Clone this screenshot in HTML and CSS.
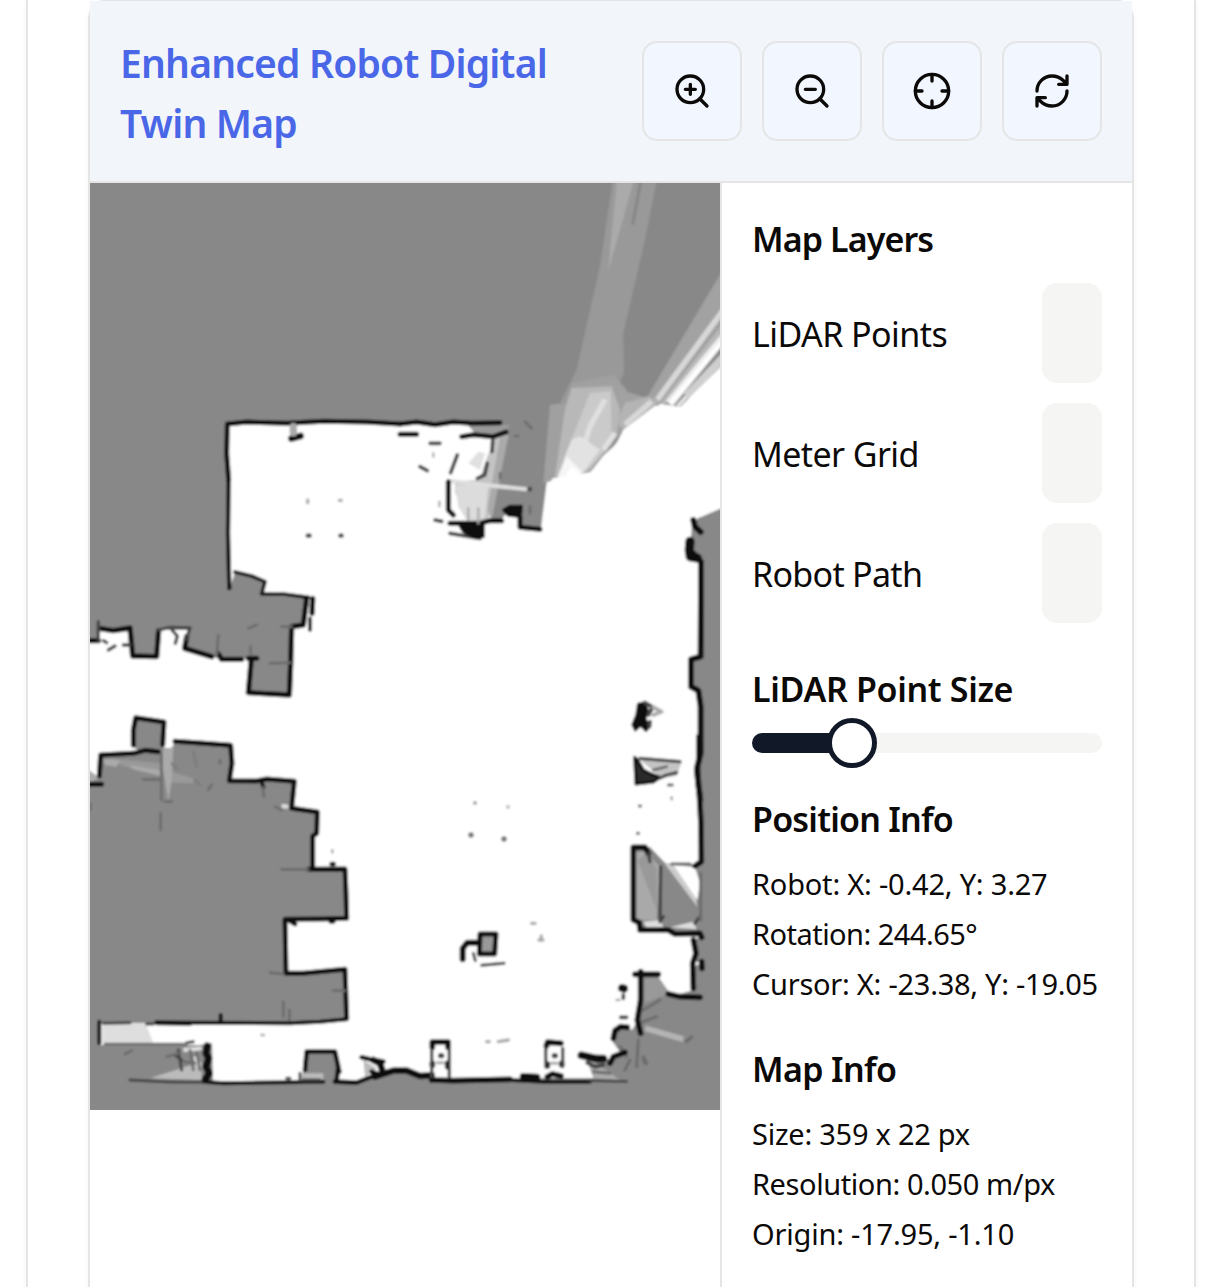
FILE: index.html
```html
<!DOCTYPE html>
<html lang="en">
<head>
<meta charset="utf-8">
<title>Enhanced Robot Digital Twin Map</title>
<link rel="stylesheet" href="styles.css">
</head>
<body>
<main class="panel">
  <section class="card">
    <header class="card-header">
      <h2 class="title">Enhanced Robot Digital<br>Twin Map</h2>
      <div class="tools">
        <button class="tool" aria-label="Zoom in"><svg class="icon" viewBox="0 0 24 24"><circle cx="11" cy="11" r="8"/><path d="m21 21-4.35-4.35M11 8v6M8 11h6"/></svg></button>
        <button class="tool" aria-label="Zoom out"><svg class="icon" viewBox="0 0 24 24"><circle cx="11" cy="11" r="8"/><path d="m21 21-4.35-4.35M8 11h6"/></svg></button>
        <button class="tool" aria-label="Center"><svg class="icon" viewBox="0 0 24 24"><circle cx="12" cy="12" r="10"/><path d="M22 12h-4M6 12H2M12 6V2M12 22v-4"/></svg></button>
        <button class="tool" aria-label="Refresh"><svg class="icon" viewBox="0 0 24 24"><path d="M3 12a9 9 0 0 1 9-9 9.75 9.75 0 0 1 6.74 2.74L21 8M21 3v5h-5M21 12a9 9 0 0 1-9 9 9.75 9.75 0 0 1-6.74-2.74L3 16M8 16H3v5"/></svg></button>
      </div>
    </header>
    <div class="card-body">
      <div class="map">
        <svg class="map-image" viewBox="90 183 630 927">
          <defs>
            <filter id="soft" filterUnits="userSpaceOnUse" x="70" y="160" width="670" height="970"><feGaussianBlur stdDeviation="1"/></filter>
          </defs>
          <g filter="url(#soft)">
          <rect x="60" y="150" width="700" height="1000" fill="#888"/>
          <!-- free space -->
          <path fill="#fff" d="M228 423H470L496 436H508L490 520L500 521L505 515H520L521 527L541 528L547 480L560 475L587 470L613 447L630 427L657 403L677 405L740 340V502L700 517L692 523L690 555L701 560V655L692 660V687L700 693V760L697 768L700 790L702 863L690 865L668 866L650 847H633V920L640 930L668 931L672 934L702 936L693 940V960L700 963L693 968V990L680 994L668 991L662 984L657 973H640L638 1020L632 1030L622 1024L613 1032L612 1041L620 1052L612 1062L604 1056L587 1056L596 1078H530V1080H430V1074L415 1073L403 1070L390 1073L380 1075L357 1081H337L335 1050H305L302 1081H213L212 1043L200 1045H100V1023H157L290 1023L347 1018L345 968L285 975V918H347L345 868H312L313 835H317V812L292 808L294 780H230V743L175 741L172 748H163L164 722L135 717L133 747L140 751L100 753L98 777L70 783V641H98V627L113 631L130 628L132 657H157L158 630L188 630L184 648L212 657L222 659L253 658L248 693L289 695L292 627L303 625L308 597L260 593L265 582L235 572L229 592Z"/>
          <!-- partially observed rays, north-east -->
          <g transform="translate(540 183) scale(.33333)">
            <path fill="#888" d="M-40 640H40L340 640L600 200V560L420 672L350 660L250 730L150 860L40 870L8 900L0 900Z"/>
            <path fill="#999" d="M222 -30H355L315 170L250 450L252 570L220 640L60 660L110 560L180 250Z"/>
            <path fill="#aaa" d="M232 -20H285L205 265L210 200Z"/>
            <path fill="none" stroke="#868686" stroke-width="9" d="M305 -20L278 125"/>
            <path fill="#a0a0a0" d="M30 665L75 660L95 600L220 575L260 620L250 740L150 870L10 900Z"/>
            <path fill="#a2a2a2" d="M600 175L400 510L320 645L240 620L235 740L345 680L600 380Z"/>
            <path fill="#b8b8b8" d="M75 680L95 615L215 610L240 680L230 760L150 860L45 880Z"/>
            <path fill="#cacaca" d="M150 630L212 625L215 780L140 865L50 880L90 780Z"/>
            <path fill="none" stroke="#e0e0e0" stroke-width="16" d="M195 650L150 730L112 850M225 750L190 800"/>
            <path fill="#e2e2e2" d="M95 770L120 760L150 780L180 800L130 868L60 885L75 820Z"/>
            <path fill="#f6f6f6" d="M80 820L110 850L130 870L90 880L50 890Z"/>
            <path fill="#b4b4b4" d="M255 660L325 640L360 655L250 740L230 720Z"/>
            <path fill="none" stroke="#d8d8d8" stroke-width="17" d="M255 725L335 655M352 650L560 368"/>
            <path fill="none" stroke="#b9b9b9" stroke-width="12" d="M368 662L560 418"/>
            <path fill="none" stroke="#ededed" stroke-width="26" d="M388 662L570 440"/>
            <path fill="none" stroke="#fff" stroke-width="12" d="M392 660L570 448"/>
            <path fill="none" stroke="#cfcfcf" stroke-width="24" d="M440 640L570 502"/>
            <path fill="none" stroke="#e8e8e8" stroke-width="10" d="M412 670L440 640"/>
            <path fill="#fff" d="M570 524L420 672L345 668L250 740L215 810L150 868L120 872L95 850L75 880L40 885L20 910H570Z"/>
          </g>
          <!-- partially observed cells around the alcove -->
          <g transform="translate(400 180) scale(.33333)">
            <path fill="#c4c4c4" d="M325 765L285 770L235 900L150 905L205 1020L265 1020Z"/>
            <path fill="#fff" d="M205 745L270 780L245 880L210 900L150 905L185 1000L165 1020V850Z"/>
            <path fill="#dcdcdc" d="M165 915L265 915L255 1015L200 1020L175 980Z"/>
            <path fill="#999" d="M200 732L330 735L315 765H230Z"/>
            <path fill="#aaa" d="M300 770L325 765L275 1020L262 990Z"/>
            <path fill="#e0e0e0" d="M205 850L235 815L255 820L240 870Z"/>
            <path stroke="#dedede" stroke-width="12" d="M145 903L380 928" fill="none"/>
          </g>
          <!-- partially observed cells, south-west -->
          <g transform="translate(90 700) scale(.33333)">
            <path fill="#dedede" d="M38 970H175L190 1035H38Z"/>
            <path fill="#fff" d="M170 978H215V1028H190Z"/>
            <path fill="#999" d="M45 175L215 190V230L120 205ZM245 215L310 235V250L240 248Z"/>
            <path fill="#aaa" d="M40 178L90 180L80 200L45 195ZM120 195L215 212V228L130 208ZM218 150L250 140L245 240L235 305L218 200ZM-10 205L30 235L-10 250Z"/>
            <path fill="#bbb" d="M180 1135L335 1085V1140ZM820 1080L860 1105L825 1130ZM640 1120H700V1140H640Z"/>
            <path fill="none" stroke="#ddd" stroke-width="12" d="M280 1050L335 1045M315 1070L330 1100M575 318L595 320"/>
          </g>
          <!-- partially observed cells, east -->
          <g transform="translate(600 740) scale(.33333)">
            <path fill="#888" d="M100 320L150 325L185 370L305 375V575L210 575L125 565L100 540Z"/>
            <path fill="#a9a9a9" d="M108 335H135L180 380L170 540H108Z"/>
            <path fill="#999" d="M112 360L170 510V385L140 340Z"/>
            <path fill="#ccc" d="M195 372L225 372L285 455L292 500Z"/>
            <path fill="#fff" d="M220 374L285 382L300 430L292 480Z"/>
            <path fill="#ddd" d="M130 545L180 540L190 560L140 565ZM210 562L280 545L290 568Z"/>
            <path fill="#999" d="M120 710L175 710L210 760L130 790Z"/>
            <path stroke="#b4b4b4" stroke-width="17" d="M135 865L250 898"/>
            <path fill="#aaa" d="M-45 945L60 1020L-20 1015Z"/>
          </g>
          <!-- walls: upper room and west corridor -->
          <g class="wall" transform="translate(90 400) scale(.33333)">
            <path stroke-width="15" d="M412 72L470 66L590 70L700 64L830 66L930 72M412 72L410 160L416 240"/>
            <path stroke-width="13" d="M416 240L414 400L418 565"/>
            <path stroke-width="11" d="M435 516L485 528L525 545L515 582L580 582L655 592"/>
            <path stroke-width="16" d="M650 595L640 675L605 680L602 790L598 885L475 878L484 778M668 595L666 640M-10 722H25M28 685L70 692L120 684L128 768L200 770L206 692M290 710L284 745L365 770M385 762L395 778L455 778M475 775H500"/>
            <path stroke-width="11" d="M660 655V690"/>
            <path stroke-width="10" class="mid" d="M25 665V720M206 690L240 682L300 684L288 720M246 690L262 708L256 730M55 750L75 738M100 735H120M40 722L50 728"/>
            <path stroke-width="8" class="faint" d="M385 705L380 765M475 685L500 675M482 740V760M575 680H605M540 790L600 788"/>
            <path stroke-width="20" d="M604 116L632 108"/>
            <path stroke-width="22" class="fade" d="M610 80V98"/>
            <path stroke-width="13" class="mid" d="M653 407h6M751 407h4"/>
            <path stroke-width="10" class="fade" d="M653 300v8M748 301h6"/>
          </g>
          <!-- walls: north-east clutter -->
          <g class="wall" transform="translate(400 180) scale(.33333)">
            <path stroke-width="15" d="M0 732L50 726L105 734L160 726L215 730L300 728M0 763H50M185 770L220 764L280 770L318 756M145 905V990L160 1005M150 1030H240L270 1022H305M360 1010V1042L420 1048"/>
            <path stroke-width="11" class="mid" d="M172 825L152 878M262 850L254 885L232 895M278 780L276 815M90 790H120M60 860L82 872M150 1060L240 1075M105 1020L125 1024M390 925v5"/>
            <path stroke-width="8" class="faint" d="M375 725L395 745M345 768h10M390 980V1000M300 880V895"/>
            <path fill="#111" stroke-width="8" d="M310 990L330 978L365 978L362 1010L325 1006ZM180 1038L250 1035L250 1070L225 1073L190 1055Z"/>
            <path stroke-width="7" class="fade" d="M205 985V1020M235 985V1030M100 820V830M118 965v14"/>
          </g>
          <!-- walls: south-west block -->
          <g class="wall" transform="translate(90 700) scale(.33333)">
            <path stroke-width="15" d="M130 135L130 90L137 53L222 66L218 135M28 228L32 165L130 160L165 151L205 155M255 124L340 130L422 136L426 190L418 242L500 243L530 237L613 244L605 325L682 336L680 400L668 408V500M655 508L765 507L768 580L770 655L690 657L585 658L588 820L640 820L765 808L770 955M-10 253H35M300 970L200 968"/>
            <path stroke-width="12" d="M770 958L690 965L600 970L300 968M28 965V1030M340 1145L400 1150L700 1145M392 945V965M515 245L520 262"/>
            <path stroke-width="9" class="mid" d="M40 970L120 968M170 972H190M120 1140L240 1146H340M290 1028L310 1025M265 1050L275 1110M255 1065L275 1080"/>
            <path stroke-width="8" class="faint" d="M214 160V300M212 340V390M45 1032H290M730 872H765M540 818L580 822M580 905V950M598 930V960M575 508H655M555 320L575 330M518 262L522 290M230 1070L270 1060M320 1060L330 1110M0 310V330M355 268L365 255M390 180V190M225 305H245M160 238H210M105 1062L125 1052M280 1085L315 1090M300 1050L310 1110"/>
            <path stroke-width="7" stroke="#7b7b7b" d="M245 190L260 205M310 155L320 200M315 240L330 255" class="dim"/>
            <path stroke-width="22" d="M352 1038L348 1060L356 1075L348 1100L358 1120L346 1138"/>
            <path stroke-width="14" d="M645 1110L650 1055H735L745 1100L740 1140M742 1090L748 1115M735 1145L800 1148L870 1120M815 1072L840 1078L880 1085M845 1115L870 1125M595 660L615 672M722 664h8M725 492h6"/>
            <path stroke-width="9" class="mid" d="M630 1120V1140M590 1135h10M640 1140L690 1140"/>
            <path stroke-width="7" class="fade" d="M727 450v8M514 1005h8"/>
          </g>
          <!-- walls: south edge and islands -->
          <g class="wall" transform="translate(380 900) scale(.33333)">
            <path stroke-width="20" d="M-20 480L0 490L6 508M-15 530L40 512L80 512L120 528L155 526"/>
            <path stroke-width="17" d="M155 540L220 542L390 538"/>
            <path stroke-width="22" d="M430 530L470 532"/>
            <path stroke-width="12" d="M390 540L490 545L630 545"/>
            <path stroke-width="8" class="mid" d="M630 542L740 544"/>
            <path stroke-width="15" fill="#999" d="M300 102H348L344 162H298Z"/>
            <path stroke-width="18" d="M248 178L248 145L262 128H290"/>
            <path stroke-width="9" class="mid" d="M280 160L286 182M305 196L372 190"/>
            <path stroke-width="10" class="fade" d="M455 70h10M477 120h12M484 108v8M320 425h8M355 425L385 420"/>
            <path stroke-width="17" d="M157 442V426H204V442M499 438L503 426L543 430M157 490V496M203 490V500M502 492V498M545 490V494M502 530L517 522L543 528"/>
            <path stroke-width="10" class="mid" d="M155 450V530M208 445V530M497 445V500M548 445V500"/>
            <path stroke-width="16" class="mid" d="M182 467h3M523 467h3"/>
            <path stroke-width="9" class="fade" d="M172 488h18M515 490h16"/>
            <path stroke-width="23" d="M604 466L650 476L670 476"/>
            <path stroke-width="12" class="mid" d="M622 488L645 500L670 495"/>
            <path stroke-width="9" class="faint" d="M640 515L690 520M720 440L740 470M775 370L830 350M790 330L840 300M735 510L750 480M790 480L795 490M920 422L935 412"/>
            <path stroke-width="17" d="M700 415L705 392L722 380L742 382M690 490L700 470L735 457"/>
          </g>
          <!-- walls: east side -->
          <g class="wall" transform="translate(610 500) scale(.33333)">
            <path fill="#fff" stroke="none" d="M240 40L275 52L335 22L335 -20L240 -10Z"/>
            <path fill="#888" stroke="none" d="M265 55L340 22V180H280L278 100Z"/>
            <path stroke-width="18" d="M250 60L255 80L272 96M250 160L273 185V300L272 470L243 478V560L265 572L272 620V760L262 800L265 850L271 900"/>
            <path stroke-width="28" d="M240 124L238 150L241 170L262 174"/>
            <path fill="#111" stroke-width="8" d="M85 612L105 608L112 630L105 655L116 680L108 692L92 676L76 690L68 674L80 645Z"/>
            <path stroke-width="12" class="mid" d="M105 608L128 622L115 645M120 665L118 680"/>
            <path stroke-width="12" class="fade" d="M130 622L155 635L130 645"/>
          </g>
          <g class="wall" transform="translate(600 740) scale(.33333)">
            <path fill="#c4c4c4" stroke="none" d="M115 55L245 65L230 108L185 115Z"/>
            <path stroke-width="17" d="M297 -10V60L290 90L298 160L303 250L304 365L285 378M145 340L135 322H100V540L118 548L120 570L205 570L225 582L300 580L305 592"/>
            <path fill="#2a2a2a" stroke-width="9" d="M104 52L114 62L130 90L150 100L180 112L160 126L108 132Z"/>
            <path stroke-width="10" class="mid" d="M120 55L240 65M180 114L200 105L230 98M182 380L180 540M145 340L150 365M285 550L295 535M180 545L190 530"/>
            <path stroke-width="9" class="faint" d="M160 90L200 80M205 135h12M118 198h4M112 280h4M302 400V540M215 372H270M115 900L110 980M260 905L275 890M130 950L140 970"/>
            <path stroke-width="17" d="M122 695V780L112 840L122 880M105 703L175 703M280 600L288 640L278 670L280 745M305 665L306 685M205 762L240 770L300 772"/>
            <path stroke-width="24" d="M66 744L72 746"/>
            <path stroke-width="11" class="mid" d="M70 765V775M62 832L80 832"/>
            <path stroke-width="8" class="fade" d="M215 172v6M50 780h8"/>
          </g>
          <g fill="#777"><circle cx="475" cy="803" r="2" opacity=".7"/><circle cx="508" cy="807" r="2" opacity=".5"/><circle cx="471" cy="835" r="2.8"/><circle cx="504" cy="839" r="2.8"/></g>
          </g>
        </svg>
      </div>
      <aside class="sidebar">
        <section class="layers">
          <h3 class="heading h-layers">Map Layers</h3>
          <div class="row"><span class="label l-points">LiDAR Points</span><span class="toggle"></span></div>
          <div class="row"><span class="label l-grid">Meter Grid</span><span class="toggle"></span></div>
          <div class="row"><span class="label l-path">Robot Path</span><span class="toggle"></span></div>
        </section>
        <section class="size">
          <h3 class="heading h-size">LiDAR Point Size</h3>
          <div class="slider"><div class="range"></div><div class="thumb"></div></div>
        </section>
        <section class="info">
          <h3 class="heading h-position">Position Info</h3>
          <div class="lines">
            <p class="i-robot">Robot: X: -0.42, Y: 3.27</p>
            <p class="i-rotation">Rotation: 244.65°</p>
            <p class="i-cursor">Cursor: X: -23.38, Y: -19.05</p>
          </div>
        </section>
        <section class="info">
          <h3 class="heading h-map">Map Info</h3>
          <div class="lines">
            <p class="i-size">Size: 359 x 22 px</p>
            <p class="i-resolution">Resolution: 0.050 m/px</p>
            <p class="i-origin">Origin: -17.95, -1.10</p>
          </div>
        </section>
      </aside>
    </div>
  </section>
</main>
</body>
</html>
```
FILE: styles.css
```css
* { box-sizing: border-box; }

body {
  margin: 0;
  background: #fff;
  color: #0c0a09;
  font-family: "Noto Sans", "Open Sans", sans-serif;
}

h2, h3, p { margin: 0; }

.panel {
  width: 1170px;
  height: 1287px;
  margin-left: 26px;
  padding: 0 60px;
  overflow: hidden;
  border: solid #e5e5e5;
  border-width: 0 2px;
  box-shadow: 0 2px 5px rgba(0, 0, 0, .05);
}

.card {
  height: 1288px;
  margin-top: -1px;
  border: 2px solid #e5e5e5;
  border-bottom: 0;
  border-radius: 20px 20px 0 0;
  box-shadow: 0 2px 5px rgba(0, 0, 0, .05);
}

.card-header {
  display: flex;
  align-items: center;
  justify-content: space-between;
  height: 182px;
  padding: 30px;
  border-bottom: 2px solid #e5e5e5;
  background: #f2f5fa;
}

.title {
  padding-top: 3px;
  color: #4a67e8;
  font-size: 39px;
  font-weight: 600;
  line-height: 60px;
  letter-spacing: -.8px;
  white-space: nowrap;
}

.tools { display: flex; gap: 20px; }

.tool {
  display: flex;
  align-items: center;
  justify-content: center;
  width: 100px;
  height: 100px;
  padding: 0;
  border: 2px solid #e5e5e5;
  border-radius: 15px;
  background: #f2f6ff;
  color: #0c0a09;
}

.icon {
  width: 40px;
  height: 40px;
  fill: none;
  stroke: currentColor;
  stroke-width: 2;
  stroke-linecap: round;
  stroke-linejoin: round;
}

.card-body {
  display: grid;
  grid-template-columns: 630px 412px;
  height: 1104px;
}

.map-image { display: block; width: 630px; height: 927px; }

.wall { fill: none; stroke: #0c0c0c; stroke-linecap: round; stroke-linejoin: round; }
.mid { stroke: #444; }
.faint { stroke: #6c6c6c; }
.dim { stroke: #7b7b7b; }
.fade { stroke: #aaa; }

.sidebar {
  display: flex;
  flex-direction: column;
  gap: 40px;
  padding: 30px;
  border-left: 2px solid #e5e5e5;
}

.heading {
  height: 50px;
  padding-top: 1px;
  font-size: 34px;
  font-weight: 600;
  line-height: 50px;
  white-space: nowrap;
}

.h-layers { letter-spacing: -.9px; }
.h-size { letter-spacing: -.33px; }
.h-position { letter-spacing: -.78px; }
.h-map { letter-spacing: -.65px; }

.layers { display: flex; flex-direction: column; gap: 20px; }

.row { display: flex; align-items: center; justify-content: space-between; height: 100px; }

.label { padding-top: 3px; font-size: 34px; line-height: 35px; white-space: nowrap; }

.l-points { letter-spacing: -.56px; }
.l-grid { letter-spacing: -.6px; }
.l-path { letter-spacing: -.7px; }

.toggle { width: 60px; height: 100px; border-radius: 15px; background: #f5f5f4; }

.size, .info { display: flex; flex-direction: column; gap: 20px; }

.slider {
  position: relative;
  height: 20px;
  border-radius: 10px;
  background: #f5f5f4;
}

.range { width: 100px; height: 20px; border-radius: 10px 0 0 10px; background: #111827; }

.thumb {
  position: absolute;
  top: -15px;
  left: 75px;
  width: 50px;
  height: 50px;
  border: 5px solid #111827;
  border-radius: 50%;
  background: #fff;
}

.lines { display: flex; flex-direction: column; gap: 10px; font-size: 29px; line-height: 40px; white-space: nowrap; }
.lines p { height: 40px; padding-top: 1px; }

.i-robot { letter-spacing: -.21px; }
.i-rotation { letter-spacing: -.53px; }
.i-cursor { letter-spacing: -.26px; }
.i-size { letter-spacing: -.25px; }
.i-resolution { letter-spacing: -.42px; }
.i-origin { letter-spacing: -.2px; }
```
